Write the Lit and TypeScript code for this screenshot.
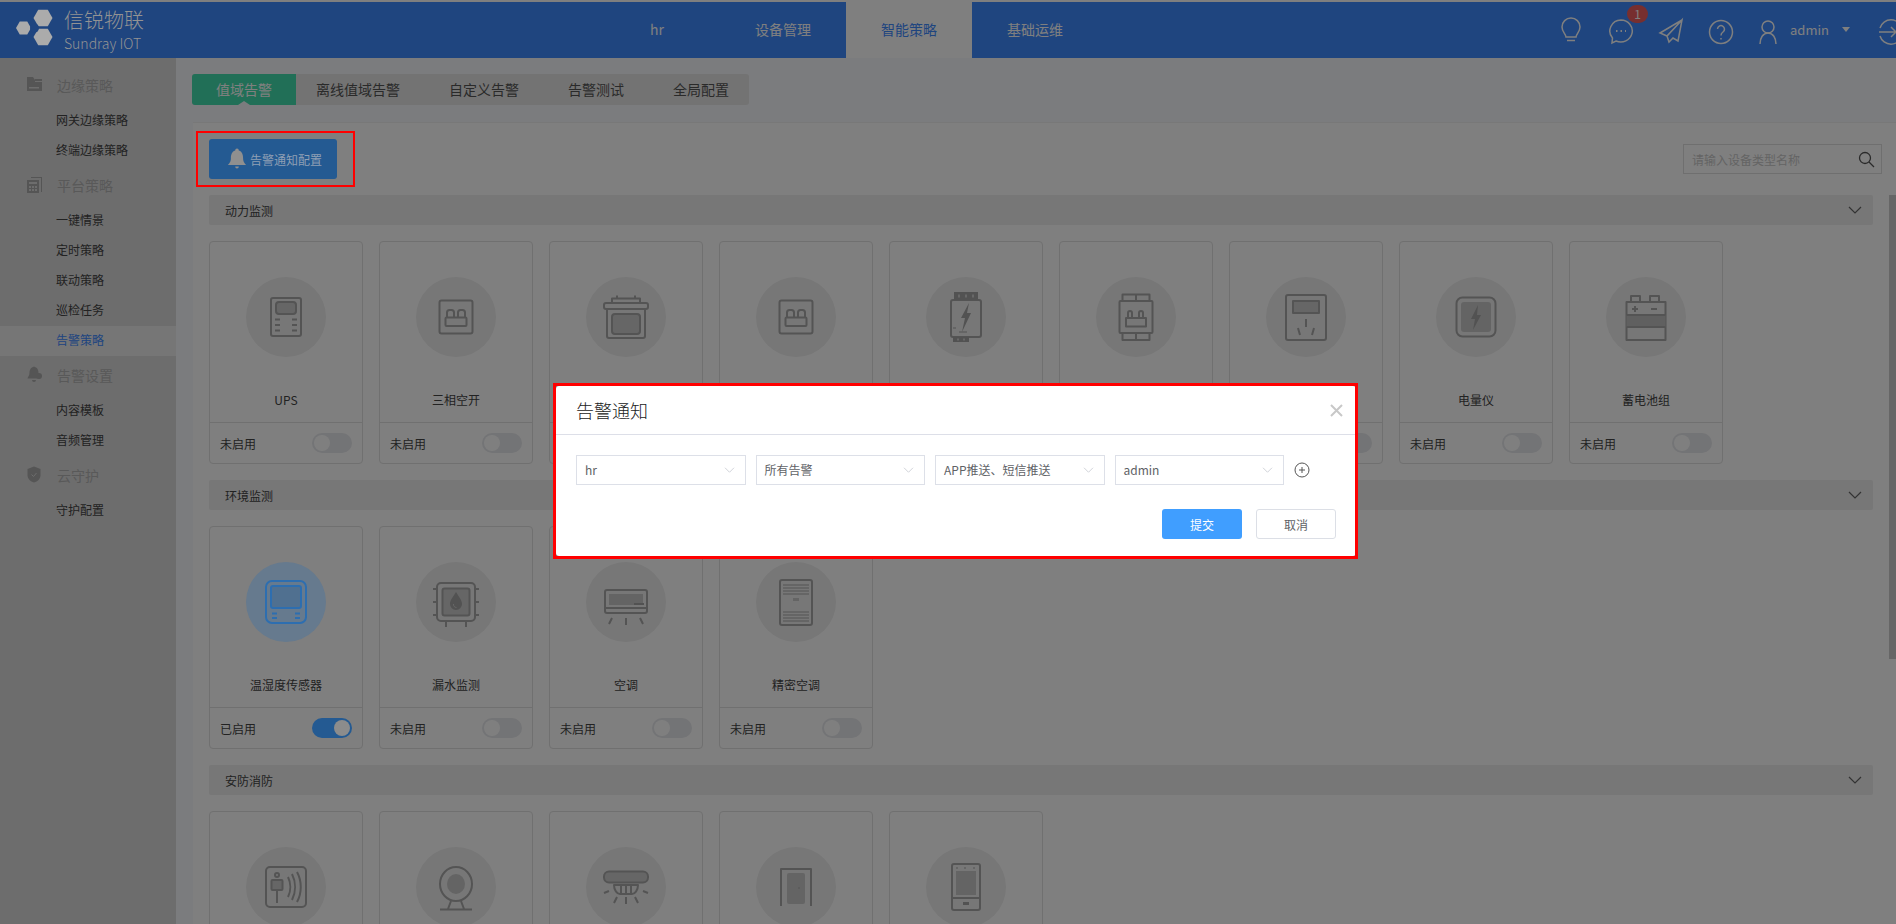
import { LitElement, html, css, svg } from "lit";
import { customElement } from "lit/decorators.js";

const hex = (cx: number, cy: number, r: number) => {
  const h = r * 0.866;
  return `${cx - r},${cy} ${cx - r / 2},${cy - h} ${cx + r / 2},${cy - h} ${cx + r},${cy} ${cx + r / 2},${cy + h} ${cx - r / 2},${cy + h}`;
};

const breaker = svg`
  <rect class="s" x="8.5" y="8.5" width="33" height="33" rx="2"/>
  <rect class="s" x="14.5" y="25.5" width="21" height="8.5" rx="1"/>
  <path class="s" d="M16 25.5v-5a2.5 2.5 0 0 1 2.5-2.5h2a2.5 2.5 0 0 1 2.5 2.5v5M27 25.5v-5a2.5 2.5 0 0 1 2.5-2.5h2a2.5 2.5 0 0 1 2.5 2.5v5"/>`;

const icons: Record<string, unknown> = {
  ups: svg`
    <rect class="s" x="10" y="6" width="30" height="38" rx="2"/>
    <rect class="s f" x="15" y="10" width="20" height="12" rx="3"/>
    <path class="t" d="M14 27.5h5M31 27.5h5M14 33h5M31 33h5M14 38.5h5M31 38.5h5"/>`,
  breaker,
  box: svg`
    <path class="s" d="M11 11V6.5h28V11M16 6.5V3.5M34 6.5V3.5"/>
    <rect class="s" x="3" y="11" width="44" height="6" rx="2"/>
    <path class="s" d="M6 17v27a2 2 0 0 0 2 2h34a2 2 0 0 0 2-2V17"/>
    <rect class="s f" x="11" y="22" width="28" height="20" rx="3"/>`,
  gateway: svg`
    <rect class="s" x="10" y="8" width="30" height="37" rx="2"/>
    <rect class="b" x="13" y="0" width="24" height="8"/>
    <rect class="b" x="12" y="45" width="16" height="5"/>
    <path class="p" d="M17 2.5h2v3h-2zM24 2.5h2v3h-2zM31 2.5h2v3h-2zM16 46.5h2v2h-2zM22 46.5h2v2h-2z"/>
    <path class="b" d="M28 11l-8 15h4l-3 14 9-19h-4l2-10z"/>
    <path class="n" d="M12 36h3M18 40h8"/>`,
  meter: svg`
    <rect class="s" x="8.5" y="9" width="33" height="32" rx="1"/>
    <path class="s" d="M11.5 9V2.5h27V9M25 2.5V9M11.5 41v7h27v-7M25 41v7"/>
    <rect class="s" x="15" y="26" width="20" height="8.5"/>
    <path class="s" d="M17 26v-5a2 2 0 0 1 4 0v5M28 26v-5a2 2 0 0 1 4 0v5"/>`,
  socket: svg`
    <rect class="s" x="5" y="3" width="40" height="45" rx="2"/>
    <rect class="s f" x="12" y="9" width="26" height="12"/>
    <path class="s" d="M25 27v8M17 36l2 7M33 36l-2 7"/>`,
  power: svg`
    <rect class="s" x="5.5" y="5.5" width="39" height="39" rx="6"/>
    <rect class="d" x="10" y="10" width="30" height="30" rx="3"/>
    <path class="b" d="M27 13l-7 14h4l-2 11 8-15h-4l1-10z"/>`,
  battery: svg`
    <rect class="s" x="5.5" y="10" width="39" height="38"/>
    <path class="s" d="M10 10V4h9v6M29 10V4h9v6"/>
    <rect class="b2" x="5.5" y="23" width="39" height="12"/>
    <path class="s" d="M5.5 23h39M5.5 35h39"/>
    <path class="t" d="M11 17h6M14 14v6M30 17h6"/>`,
  temp: svg`
    <rect class="s" x="5" y="4" width="40" height="42" rx="6"/>
    <rect class="s f" x="10" y="9" width="30" height="22" rx="2"/>
    <path class="t" d="M11 36.5h5M34 36.5h5M11 41h5M34 41h5"/>`,
  water: svg`
    <rect class="s" x="6" y="6" width="38" height="38" rx="4"/>
    <rect class="s f" x="11.5" y="11.5" width="27" height="27" rx="2"/>
    <path class="t" d="M2 12h4M44 12h4M2 25h4M44 25h4M2 38h4M44 38h4M15 44v6M35 44v6"/>
    <path class="b" d="M25 15c-3 5-6 8-6 12a6 6 0 0 0 12 0c0-4-3-7-6-12z"/>
    <path class="l" d="M22.5 27a3 3 0 0 0 3 3.500"/>`,
  ac: svg`
    <rect class="s" x="4" y="13" width="42" height="23" rx="2"/>
    <rect class="d" x="8" y="17" width="34" height="11"/>
    <rect class="b" x="33" y="26" width="10" height="2"/>
    <path class="t" d="M4 31h42M25 41v7M11 41l-3 6M39 41l3 6"/>`,
  cabinet: svg`
    <rect class="s" x="9" y="3" width="32" height="45" rx="2"/>
    <path class="n" d="M12 8h26M12 11h26M12 14h26M12 17h26M12 35h26M12 38h26M12 41h26M12 44h26"/>
    <rect class="d" x="22" y="21" width="6" height="3"/>`,
  person: svg`
    <rect class="s" x="5" y="5" width="40" height="40" rx="4"/>
    <circle class="s" cx="16" cy="13" r="2"/>
    <rect class="s f" x="10.5" y="18" width="11" height="10" rx="1"/>
    <path class="s" d="M16 28v13M27 15c3 6 3 14 0 20M31 12c4 8 4 18 0 26M36 10c5 9 5 21 0 30"/>`,
  camera: svg`
    <ellipse class="s" cx="25" cy="22" rx="16" ry="17"/>
    <ellipse class="d" cx="25" cy="22" rx="9" ry="10"/>
    <path class="s" d="M20 39l-3 8M30 39l3 8M9 47.5h32"/>`,
  smoke: svg`
    <rect class="s f" x="3" y="9.5" width="44" height="11" rx="5"/>
    <path class="s" d="M13 23c0 5 3 9 6 9h12c3 0 6-4 6-9z"/>
    <path class="t" d="M20 24v7M25 24v7M30 24v7M3 31l5-2M47 31l-5-2M13 41l3-6M37 41l-3-6M25 42v-7"/>`,
  door: svg`
    <path class="s" d="M10 44V7h30v37"/>
    <rect class="d" x="16" y="11" width="18" height="31" rx="2"/>
    <circle class="b" cx="28" cy="26" r=".8"/>`,
  panel: svg`
    <rect class="s" x="11" y="2" width="28" height="46" rx="2"/>
    <rect class="d" x="15" y="9" width="20" height="24"/>
    <path class="n" d="M16 5v2M24 5v2M33 5v2"/>
    <path class="t" d="M11 36h28"/>
    <rect class="b" x="22" y="40" width="6" height="3"/>`,
};

/* name is empty where the reference hides it (behind the dialog or below the fold) */
type Card = { name: string; icon: string; on?: boolean };
type Section = { title: string; cards: Card[] };

const sections: Section[] = [
  {
    title: "动力监测",
    cards: [
      { name: "UPS", icon: "ups" },
      { name: "三相空开", icon: "breaker" },
      { name: "", icon: "box" },
      { name: "", icon: "breaker" },
      { name: "", icon: "gateway" },
      { name: "", icon: "meter" },
      { name: "", icon: "socket" },
      { name: "电量仪", icon: "power" },
      { name: "蓄电池组", icon: "battery" },
    ],
  },
  {
    title: "环境监测",
    cards: [
      { name: "温湿度传感器", icon: "temp", on: true },
      { name: "漏水监测", icon: "water" },
      { name: "空调", icon: "ac" },
      { name: "精密空调", icon: "cabinet" },
    ],
  },
  {
    title: "安防消防",
    cards: [
      { name: "", icon: "person" },
      { name: "", icon: "camera" },
      { name: "", icon: "smoke" },
      { name: "", icon: "door" },
      { name: "", icon: "panel" },
    ],
  },
];

const sideIcons: Record<string, unknown> = {
  folder: svg`<path d="M1 1h6l2 3v2h7v9H1z"/><path d="M9 3h7v2H9z"/><path fill="#dadada" d="M3 11h10v1.5H3z"/>`,
  report: svg`<path d="M1 4h12v13H1z"/><path d="M15 2v14h1V1H5v1z"/><path fill="#dadada" d="M3 6h8v2H3zM3 10h2v2H3zM6 10h2v2H6zM9 10h2v2H9zM3 13h2v2H3zM6 13h2v2H6zM9 13h2v2H9z"/>`,
  bell: svg`<path d="M7 1a1.5 1.5 0 0 1 2 0c3 1 3.5 4 3.5 6 0 3 2 4 2 5.5H1.5C1.5 11 3.5 10 3.5 7c0-2 .5-5 3.5-6zM6 14h4a2 2 0 0 1-4 0z"/><circle cx="13" cy="10" r="3"/>`,
  shield: svg`<path d="M8 .5l6.5 2.500v6c0 4-3 6.500-6.500 7.500C4.500 15.500 1.500 13 1.500 9V3z"/><path fill="none" stroke="#dadada" d="M5.500 8.500l2 2 3-3.500"/>`,
};

const sideGroups = [
  { title: "边缘策略", icon: "folder", items: ["网关边缘策略", "终端边缘策略"] },
  { title: "平台策略", icon: "report", items: ["一键情景", "定时策略", "联动策略", "巡检任务", "告警策略"] },
  { title: "告警设置", icon: "bell", items: ["内容模板", "音频管理"] },
  { title: "云守护", icon: "shield", items: ["守护配置"] },
];

const chevron = (cls: string) => html`<svg class=${cls} viewBox="0 0 14 8"><path d="M1 1l6 6 6-6"/></svg>`;

@customElement("app-root")
export class AppRoot extends LitElement {
  static styles = css`
    :host {
      display: block;
      position: relative;
      width: 1896px;
      height: 924px;
      overflow: hidden;
      background: #fff;
      font-family: "Noto Sans CJK SC", "Noto Sans", sans-serif;
      font-size: 12px;
      color: #444;
    }
    .page { display: flex; flex-direction: column; height: 100%; padding-top: 2px; box-sizing: border-box; }
    header { display: flex; height: 56px; flex: none; background: #3e8aff; color: #fff; }
    .logo { width: 594px; flex: none; display: flex; align-items: center; position: relative; z-index: 11; }
    .logo svg { width: 64px; height: 56px; flex: none; }
    .logo-text { color: #939393; line-height: 1; font-weight: 300; }
    .logo-cn { font-size: 20px; line-height: 24px; }
    .logo-en { font-size: 14px; line-height: 20px; margin-top: 1px; white-space: nowrap; }
    .nav { display: flex; }
    .nav div { width: 126px; display: flex; align-items: center; justify-content: center; font-size: 14px; padding-bottom: 2px; box-sizing: border-box; }
    .nav .act { background: #fff; color: #3e8aff; }
    .tools { flex: 1; position: relative; }
    .badge { position: absolute; left: 1627px; top: 3px; width: 21px; height: 18px; border-radius: 10px; background: #ef5f5f; color: #fff; font-size: 12px; line-height: 18px; text-align: center; }
    .tools-inner { position: absolute; inset: 0 0 0 -1098px; }
    .tools-inner svg { position: absolute; fill: none; stroke: #fff; stroke-width: 1.5; }
    .admin { position: absolute; left: 1790px; top: 18px; font-size: 13px; line-height: 20px; }
    .caret { position: absolute; left: 1842px; top: 25px; width: 0; height: 0; border: 4.5px solid transparent; border-top: 5px solid #fff; border-bottom: 0; }
    .body { flex: 1; display: flex; min-height: 0; }
    aside { width: 176px; flex: none; background: #dadada; padding-top: 8px; box-sizing: border-box; }
    .side-h { height: 40px; display: flex; align-items: center; font-size: 14px; color: #b2b2b2; padding: 0 0 2px 26px; box-sizing: border-box; }
    .side-h svg { width: 18px; height: 18px; fill: #aaa; margin-right: 13px; flex: none; }
    .side-i { height: 30px; line-height: 28px; padding-left: 56px; color: #444; }
    .side-i.act { background: #ececec; color: #3e8aff; }
    main { flex: 1; min-width: 0; background: #f6f8fc; padding-top: 16px; display: flex; flex-direction: column; }
    .tabs { display: flex; align-self: flex-start; margin-left: 16px; height: 31px; background: #e6e6e6; border-radius: 3px; font-size: 14px; line-height: 31px; color: #555; }
    .tab { padding: 0 24.5px; }
    .tab:nth-child(2) { padding-left: 20px; }
    .tab:last-child { padding-right: 20px; }
    .tab.act { position: relative; padding: 0 24px; background: #42dfae; color: #fff; border-radius: 3px 0 0 3px; }
    .tab.act::after { content: ""; position: absolute; left: 46px; bottom: 0; border: 6px solid transparent; border-bottom: 4px solid #f6f8fc; border-top: 0; }
    .panel { flex: 1; min-height: 0; position: relative; margin: 17px 0 0 17px; background: #fff; padding: 17px 0 0 16px; overflow: hidden; border-top: 1px solid #f0f0f0; box-sizing: border-box; }
    .toolbar { display: flex; align-items: center; justify-content: space-between; padding-right: 14px; margin-bottom: 16px; margin-top: -1px; }
    .bell-btn { position: relative; z-index: 11; width: 128px; height: 40px; border-radius: 3px; background: #245a92; color: #8f9fb4; display: flex; align-items: center; padding-left: 17px; box-sizing: border-box; }
    .bell-btn svg { width: 22px; height: 22px; fill: #8f8f8f; margin-right: 2px; }
    .search { width: 199px; height: 30px; box-sizing: border-box; border: 1px solid #dedede; display: flex; align-items: center; justify-content: space-between; padding: 0 6px 0 8px; color: #c8c8c8; background: #fff; }
    .search svg { width: 17px; height: 17px; fill: none; stroke: #555; stroke-width: 1.3; }
    .sec-bar { height: 30px; margin-right: 23px; background: #eee; display: flex; align-items: center; justify-content: space-between; padding: 0 11px 0 16px; border-radius: 2px; color: #444; }
    .chev { width: 14px; height: 8px; fill: none; stroke: #666; stroke-width: 1.2; }
    .cards { display: flex; flex-wrap: wrap; gap: 16px; margin: 16px 0; }
    .card { width: 154px; height: 223px; box-sizing: border-box; border: 1px solid #e0e0e0; border-radius: 4px; display: flex; flex-direction: column; }
    .card-main { flex: 1; display: flex; flex-direction: column; align-items: center; padding-top: 35px; }
    .circle { width: 80px; height: 80px; border-radius: 50%; background: #eeeeee; display: flex; align-items: center; justify-content: center; color: #a8a8a8; }
    .circle.on { position: relative; z-index: 11; background: #667a8e; color: #2d6eb0; }
    .circle svg { width: 50px; height: 50px; overflow: visible; }
    .s { fill: none; stroke: currentColor; stroke-width: 2; stroke-linejoin: round; }
    .s.f { fill: #cccccc; }
    .circle.on .s.f { fill: #507090; }
    .d { fill: #c8c8c8; stroke: none; }
    .t { fill: none; stroke: currentColor; stroke-width: 2; }
    .n { fill: none; stroke: currentColor; stroke-width: 1; }
    .b { fill: #a4a4a4; }
    .b2 { fill: #c0c0c0; }
    .p { fill: #d0d0d0; }
    .l { fill: none; stroke: #d0d0d0; stroke-width: 1; }
    .name { margin-top: 34px; line-height: 18px; min-height: 18px; color: #444; }
    .foot { height: 40px; flex: none; border-top: 1px solid #e0e0e0; display: flex; align-items: center; justify-content: space-between; padding: 0 10px; color: #444; }
    .toggle { width: 40px; height: 20px; border-radius: 10px; background: #e7e8ec; display: flex; align-items: center; padding: 0 2px; box-sizing: border-box; }
    .toggle i { width: 16px; height: 16px; border-radius: 50%; background: #fff; }
    .toggle.on { position: relative; z-index: 11; background: #245a92; justify-content: flex-end; }
    .toggle.on i { background: #8c8c8c; }
    .thumb { position: absolute; top: 72px; right: 0; width: 7px; height: 464px; background: #cccccc; }
    .mask { position: absolute; inset: 0; background: rgba(0, 0, 0, 0.5); z-index: 10; }
    .dialog { position: absolute; left: 556px; top: 386px; width: 800px; height: 170px; background: #fff; border-radius: 3px; box-shadow: 0 1px 2px rgba(0,0,0,.3); color: #606266; }
    .d-head { height: 48px; border-bottom: 1px solid #dddfe8; display: flex; align-items: center; justify-content: space-between; padding: 0 13px 0 20px; font-size: 18px; color: #222; font-weight: 300; }
    .d-close { width: 13px; height: 13px; fill: none; stroke: #c8c8c8; stroke-width: 2; }
    .d-row { display: flex; gap: 10px; align-items: center; padding: 20px 0 0 20px; }
    .sel { height: 30px; width: 169.5px; box-sizing: border-box; border: 1px solid #dde0e8; display: flex; align-items: center; justify-content: space-between; padding: 0 10px 0 8px; line-height: 1; }
    .sel-chev { width: 11px; height: 6px; fill: none; stroke: #c0c4cc; stroke-width: 1; }
    .plus { width: 16px; height: 16px; fill: none; stroke: #555; stroke-width: 1; }
    .d-foot { display: flex; justify-content: flex-end; gap: 14px; padding: 24px 20px 0 0; }
    .btn { width: 80px; height: 30px; box-sizing: border-box; border-radius: 3px; display: flex; align-items: center; justify-content: center; }
    .btn.pri { background: #409eff; color: #fff; }
    .btn.sec { border: 1px solid #dcdfe6; color: #606266; }
    .mark { position: absolute; border: 2px solid #f00; z-index: 12; box-sizing: border-box; }
    .mark.m1 { left: 196px; top: 131px; width: 159px; height: 56px; }
    .mark.m2 { left: 553px; top: 383px; width: 805px; height: 176px; border-width: 3px; }
  `;

  private card(c: Card) {
    return html`<div class="card">
      <div class="card-main">
        <div class="circle ${c.on ? "on" : ""}"><svg viewBox="0 0 50 50">${icons[c.icon]}</svg></div>
        <div class="name">${c.name}</div>
      </div>
      <div class="foot">
        <span>${c.name ? (c.on ? "已启用" : "未启用") : ""}</span>
        <div class="toggle ${c.on ? "on" : ""}"><i></i></div>
      </div>
    </div>`;
  }

  render() {
    return html`<div class="page">
        <header>
          <div class="logo">
            <svg viewBox="0 0 64 56">
              <polygon fill="#ababab" points=${hex(23.5, 26, 7.5)}/>
              <polygon fill="#ababab" points=${hex(43, 16, 9.5)}/>
              <polygon fill="#ababab" points=${hex(43, 35, 9.5)}/>
              <circle fill="#1f4580" cx="34.5" cy="26" r="4.5"/>
            </svg>
            <div class="logo-text">
              <div class="logo-cn">信锐物联</div>
              <div class="logo-en">Sundray IOT</div>
            </div>
          </div>
          <div class="nav">
            <div>hr</div><div>设备管理</div><div class="act">智能策略</div><div>基础运维</div>
          </div>
          <div class="tools">
            <div class="tools-inner">
              <svg style="left:1559px;top:15px;width:24px;height:28px" viewBox="0 0 24 28"><path d="M7 20c0-3-4-5-4-10a9 9 0 0 1 18 0c0 5-4 7-4 10zM8 23.5h8"/></svg>
              <svg style="left:1608px;top:15px;width:26px;height:28px" viewBox="0 0 26 28"><path d="M13 3a11.5 11 0 1 1-5 21l-4 2 .5-5A11.5 11 0 0 1 13 3z"/><path stroke-dasharray="1.5 3" stroke-width="1.8" d="M8 14h10"/></svg>
              <div class="badge">1</div>
              <svg style="left:1658px;top:15px;width:26px;height:28px" viewBox="0 0 26 28"><path d="M24 3L2 16l7 3zM24 3l-15 16 2 6 4-4 5 3zM11 25l-2-6"/></svg>
              <svg style="left:1708px;top:17px;width:26px;height:26px" viewBox="0 0 26 26"><circle cx="13" cy="13" r="11.5"/><path d="M9.5 10a3.5 3.5 0 1 1 5.5 3c-1.5 1-2 1.5-2 3.5M13 19v1.5"/></svg>
              <svg style="left:1756px;top:17px;width:24px;height:26px" viewBox="0 0 24 26"><circle cx="12" cy="8" r="6"/><path d="M4 25c0-6 3-11 8-11s8 5 8 11"/></svg>
              <div class="admin">admin</div>
              <div class="caret"></div>
              <svg style="left:1878px;top:17px;width:26px;height:26px" viewBox="0 0 26 26"><path d="M2 9a11.5 11.5 0 0 1 22 0M2 17a11.5 11.5 0 0 0 22 0M1 13h17M13 8l5 5-5 5"/></svg>
            </div>
          </div>
        </header>
        <div class="body">
          <aside>
            ${sideGroups.map(
              (g) => html`<div class="side-h"><svg viewBox="0 0 18 18">${sideIcons[g.icon]}</svg><span>${g.title}</span></div>
                ${g.items.map((i) => html`<div class="side-i ${i === "告警策略" ? "act" : ""}">${i}</div>`)}`
            )}
          </aside>
          <main>
            <div class="tabs">
              <div class="tab act">值域告警</div>
              <div class="tab">离线值域告警</div>
              <div class="tab">自定义告警</div>
              <div class="tab">告警测试</div>
              <div class="tab">全局配置</div>
            </div>
            <div class="panel">
              <div class="toolbar">
                <div class="bell-btn">
                  <svg viewBox="0 0 18 18"><path d="M7.5 2a1.5 1.5 0 0 1 3 0c3 1 3.5 4 3.5 6.5 0 3 1.5 4 2.5 5.5h-15c1-1.5 2.5-2.5 2.5-5.5C4 6 4.5 3 7.5 2zM7.5 15.2h3a1.5 1.5 0 0 1-3 0z"/></svg>
                  <span>告警通知配置</span>
                </div>
                <div class="search">
                  <span>请输入设备类型名称</span>
                  <svg viewBox="0 0 17 17"><circle cx="7" cy="7" r="5.5"/><path d="M11 11l5 5"/></svg>
                </div>
              </div>
              ${sections.map(
                (s) => html`<div class="sec-bar"><span>${s.title}</span>${chevron("chev")}</div>
                  <div class="cards">${s.cards.map((c) => this.card(c))}</div>`
              )}
              <div class="thumb"></div>
            </div>
          </main>
        </div>
      </div>
      <div class="mask">
        <div class="dialog">
          <div class="d-head">
            <span>告警通知</span>
            <svg class="d-close" viewBox="0 0 13 13"><path d="M1 1l11 11M12 1L1 12"/></svg>
          </div>
          <div class="d-row">
            <div class="sel"><span>hr</span>${chevron("sel-chev")}</div>
            <div class="sel"><span>所有告警</span>${chevron("sel-chev")}</div>
            <div class="sel"><span>APP推送、短信推送</span>${chevron("sel-chev")}</div>
            <div class="sel"><span>admin</span>${chevron("sel-chev")}</div>
            <svg class="plus" viewBox="0 0 16 16"><circle cx="8" cy="8" r="7"/><path d="M8 5v6M5 8h6"/></svg>
          </div>
          <div class="d-foot">
            <div class="btn pri">提交</div>
            <div class="btn sec">取消</div>
          </div>
        </div>
      </div>
      <div class="mark m1"></div>
      <div class="mark m2"></div>`;
  }
}
